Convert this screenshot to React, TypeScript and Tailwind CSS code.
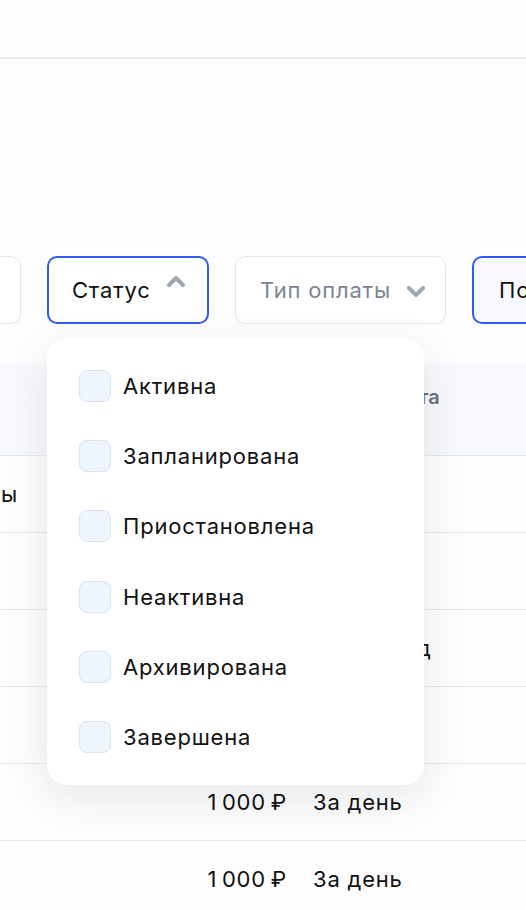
import React from "react";

const items = ["Активна", "Запланирована", "Приостановлена", "Неактивна", "Архивирована", "Завершена"];

function Chevron({ up, className }: { up?: boolean; className?: string }) {
  return (
    <svg width="20" height="12" viewBox="0 0 20 12" className={className}>
      <polyline
        points={up ? "3,10 10,3 17,10" : "3,2 10,9 17,2"}
        fill="none"
        stroke="currentColor"
        strokeWidth="4"
        strokeLinecap="round"
        strokeLinejoin="round"
      />
    </svg>
  );
}

const rows = [
  { name: "Товары", amount: "", type: "" },
  { name: "", amount: "", type: "" },
  { name: "", amount: "", type: "За период" },
  { name: "", amount: "", type: "" },
  { name: "", amount: "1\u2009000\u2009₽", type: "За день" },
  { name: "", amount: "1\u2009000\u2009₽", type: "За день" },
];

export default function App() {
  return (
    <div
      className="relative w-[526px] h-[910px] overflow-hidden bg-[#fdfdfd] text-[#111111]"
      style={{ fontFamily: "Inter, 'Noto Sans', sans-serif" }}
    >
      <div className="h-[59px] border-b-2 border-[#ececf1] bg-[#fdfdfd]" />

      {/* filters */}
      <div className="mt-[197px] flex gap-[26px] ml-[-120px] whitespace-nowrap text-[22px] tracking-[0.8px]">
        <div className="h-[68px] w-[141px] shrink-0 rounded-[10px] border border-[#e3e7ed] bg-white" />
        <div className="relative shrink-0">
          <div className="h-[68px] w-[162px] rounded-[10px] border-2 border-[#2d5cf4] bg-white flex items-center pl-[23px] pr-[21px] justify-between">
            <span className="leading-none">Статус</span>
            <Chevron up className="text-[#9ea8b3] -mt-[18px]" />
          </div>
          {/* dropdown */}
          <div className="absolute left-0 top-[82px] z-10 w-[377px] h-[447px] rounded-[20px] bg-white shadow-[0_12px_44px_rgba(30,40,60,0.10)] flex flex-col justify-between py-[32px] pl-[32px]">
            {items.map((t) => (
              <div key={t} className="flex items-center gap-[12px] h-[32px]">
                <div className="w-[32px] h-[32px] rounded-[8px] border border-[#d9e4f0] bg-[#eef5fd]" />
                <span className="leading-none">{t}</span>
              </div>
            ))}
          </div>
        </div>
        <div className="h-[68px] w-[211px] shrink-0 rounded-[10px] border border-[#e3e7ed] bg-white flex items-center pl-[24px] pr-[19px] justify-between">
          <span className="leading-none text-[#7b8593]">Тип оплаты</span>
          <Chevron className="text-[#9ea8b3] mt-[3px]" />
        </div>
        <div className="h-[68px] w-[180px] shrink-0 rounded-[10px] border-2 border-[#2d5cf4] bg-[#f6f8fd] flex items-center pl-[25px]">
          <span className="leading-none">Подписка</span>
        </div>
      </div>

      {/* table */}
      <div className="mt-[39px] ml-[-67px] w-[720px] text-[22px] tracking-[0.8px]">
        <div className="h-[93px] bg-[#f8f9fc] border-b border-[#e3e8ee] grid grid-cols-[227px_127px_1fr] pt-[20px] leading-[28px] text-[20px] font-semibold text-[#6b7381] tracking-normal">
          <div></div>
          <div></div>
          <div className="pl-[16px]">Срок расчета</div>
        </div>
        {rows.map((r, i) => (
          <div
            key={i}
            className="h-[77px] border-b border-[#e3e8ee] grid grid-cols-[227px_127px_1fr] items-center"
          >
            <div>{r.name}</div>
            <div className="text-right">{r.amount}</div>
            <div className="pl-[26px]">{r.type}</div>
          </div>
        ))}
      </div>
    </div>
  );
}
